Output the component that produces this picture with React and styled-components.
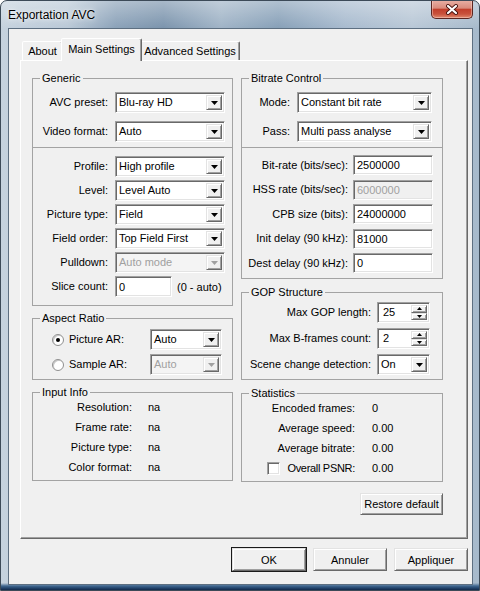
import React from "react";
import styled, { createGlobalStyle } from "styled-components";

const GlobalStyle = createGlobalStyle`
  html, body { margin: 0; padding: 0; background: #fff; }
  body {
    font-family: "Liberation Sans", Arial, sans-serif;
    font-size: 11px;
    color: #000;
  }
  * { box-sizing: border-box; }
`;

const Window = styled.div`
  width: 480px;
  height: 591px;
  display: flex;
  flex-direction: column;
  border: 1px solid #3c4a58;
  border-radius: 7px 7px 0 0;
  overflow: hidden;
  background:
    linear-gradient(to top, #13294a 0, #24466e 2px, #3f668f 4px, rgba(90, 125, 160, 0) 7px),
    linear-gradient(to bottom, rgba(255, 255, 255, 0.35) 0, rgba(255, 255, 255, 0) 28px),
    linear-gradient(90deg, #c5d2de 0%, #b9c8d6 14%, #8aa1b8 24%, #7a93ac 34%, #9fb3c6 46%, #869fb7 58%, #a7bace 72%, #b8c7d6 86%, #a6b9cb 100%);
`;

const TitleBar = styled.div`
  height: 27px;
  flex: none;
  display: flex;
  justify-content: space-between;
  align-items: flex-start;
`;

const Title = styled.div`
  padding: 7px 0 0 7px;
  font-size: 12px;
  line-height: 14px;
  color: #000;
  text-shadow: 0 0 6px rgba(255, 255, 255, 0.95), 0 0 2px rgba(255, 255, 255, 0.9);
`;

const CloseButton = styled.div`
  width: 42px;
  height: 19px;
  margin: -1px 6px 0 0;
  display: flex;
  align-items: center;
  justify-content: center;
  border: 1px solid #5b2621;
  border-top: none;
  border-radius: 0 0 5px 5px;
  background: linear-gradient(to bottom, #e9b1a6 0%, #d98b7c 45%, #c23f2b 52%, #c9523c 78%, #e08a6e 100%);
  box-shadow: inset 0 0 0 1px rgba(255, 220, 210, 0.45);
`;

const Client = styled.div`
  flex: 1;
  margin: 0 6px 5px 7px;
  border: 1px solid #5d6f81;
  background: #f0f0f0;
  padding: 9px 3px 0 11px;
  display: flex;
  flex-direction: column;
`;

const TabStrip = styled.div`
  display: flex;
  align-items: flex-end;
  height: 23px;
  margin: 0 0 -1px 2px;
`;

const Tab = styled.div`
  position: relative;
  z-index: ${(p) => (p.$active ? 2 : 0)};
  width: ${(p) => p.$w}px;
  height: ${(p) => (p.$active ? 23 : 19)}px;
  margin: 0 ${(p) => (p.$active ? -2 : 0)}px ${(p) => (p.$active ? 0 : 1)}px;
  padding-bottom: ${(p) => (p.$active ? 3 : 0)}px;
  display: flex;
  align-items: center;
  justify-content: center;
  background: #f0f0f0;
  border: 1px solid;
  border-bottom: none;
  border-color: #fff #696969 transparent #fff;
  border-radius: 2px 2px 0 0;
  box-shadow: inset -1px 0 #a0a0a0;
  white-space: nowrap;
`;

const Panel = styled.div`
  position: relative;
  z-index: 1;
  width: 448px;
  height: 479px;
  border: 1px solid;
  border-color: #fff #696969 #696969 #fff;
  box-shadow: inset -1px -1px #a0a0a0;
  padding: 11px 0 0 11px;
  display: grid;
  grid-template-columns: 201px 202px;
  column-gap: 8px;
  align-content: start;
  align-items: start;
`;

const Column = styled.div`
  display: flex;
  flex-direction: column;
`;

const Group = styled.fieldset`
  margin: ${(p) => p.$mt || 0}px 0 0;
  padding: 0;
  min-width: 0;
  border: 1px solid #a3a3a3;
`;

const Legend = styled.legend`
  margin-left: 7px;
  padding: 0 2px;
  font-size: 11px;
  line-height: 13px;
`;

const Rows = styled.div`
  display: grid;
  grid-template-columns: ${(p) => p.$cols};
  column-gap: ${(p) => p.$cg}px;
  row-gap: ${(p) => p.$rg}px;
  align-items: center;
  padding: ${(p) => p.$pad};
  border-top: ${(p) => (p.$divided ? "1px solid #a3a3a3" : "none")};
`;

const Label = styled.div`
  text-align: ${(p) => (p.$left ? "left" : "right")};
  white-space: nowrap;
  line-height: 13px;
`;

const CheckLabel = styled.div`
  display: flex;
  justify-content: flex-end;
  align-items: center;
  white-space: nowrap;
  line-height: 13px;
  letter-spacing: -0.3px;
`;

const Value = styled.div`
  line-height: 13px;
`;

const sunken = `
  border: 1px solid;
  border-color: #a0a0a0 #fff #fff #a0a0a0;
  box-shadow: inset 1px 1px #696969, inset -1px -1px #e3e3e3;
`;

const raised = `
  background: #f0f0f0;
  border: 1px solid;
  border-color: #e3e3e3 #696969 #696969 #e3e3e3;
  box-shadow: inset 1px 1px #fff, inset -1px -1px #a0a0a0;
`;

const ComboBox = styled.div`
  ${sunken}
  height: 21px;
  padding: 2px;
  display: flex;
  align-items: stretch;
  background: ${(p) => (p.$disabled ? "#f4f4f4" : "#fff")};
  color: ${(p) => (p.$disabled ? "#a0a0a0" : "#000")};
`;

const ComboText = styled.div`
  flex: 1;
  padding-left: 1px;
  line-height: 15px;
  white-space: nowrap;
  overflow: hidden;
`;

const DropButton = styled.div`
  ${raised}
  width: 16px;
  display: flex;
  align-items: center;
  justify-content: center;
`;

const TextBox = styled.div`
  ${sunken}
  width: ${(p) => (p.$w ? `${p.$w}px` : "auto")};
  height: ${(p) => p.$h || 20}px;
  padding: 0 3px;
  display: flex;
  align-items: center;
  background: ${(p) => (p.$disabled ? "#f0f0f0" : "#fff")};
  color: ${(p) => (p.$disabled ? "#a0a0a0" : "#000")};
  white-space: nowrap;
`;

const SpinBox = styled.div`
  ${sunken}
  height: 21px;
  padding: 2px 2px 2px 5px;
  display: flex;
  align-items: stretch;
  background: #fff;
`;

const SpinText = styled.div`
  flex: 1;
  line-height: 15px;
`;

const SpinButtons = styled.div`
  width: 16px;
  display: flex;
  flex-direction: column;
`;

const SpinButton = styled.div`
  ${raised}
  flex: 1;
  display: flex;
  align-items: center;
  justify-content: center;
`;

const Inline = styled.div`
  display: flex;
  align-items: center;
  gap: 5px;
  white-space: nowrap;
`;

const Radio = styled.div`
  width: 12px;
  height: 12px;
  border-radius: 50%;
  border: 1px solid #8f8f8f;
  background: #fff;
  box-shadow: inset 1px 1px #c8c8c8;
  display: flex;
  align-items: center;
  justify-content: center;
  &::after {
    content: "";
    width: 4px;
    height: 4px;
    border-radius: 50%;
    background: ${(p) => (p.$checked ? "#000" : "transparent")};
  }
`;

const CheckBox = styled.div`
  ${sunken}
  width: 13px;
  height: 13px;
  margin-right: 7px;
  background: #fff;
`;

const ButtonBar = styled.div`
  display: flex;
  justify-content: flex-end;
  gap: 7px;
  margin: 9px 1px 0 0;
`;

const PushButton = styled.div`
  ${raised}
  width: ${(p) => p.$w || 74}px;
  height: ${(p) => p.$h || 23}px;
  display: flex;
  align-items: center;
  justify-content: center;
  white-space: nowrap;
  ${(p) => (p.$default ? "outline: 1px solid #1a1a1a;" : "")}
`;

const RestoreCell = styled.div`
  grid-column: 2;
  justify-self: end;
  margin-top: 11px;
`;

const Arrow = ({ disabled }) => (
  <svg width="7" height="4" viewBox="0 0 7 4">
    <path d="M0 0h7L3.5 4z" fill={disabled ? "#a0a0a0" : "#000"} />
  </svg>
);

const SmallArrow = ({ up }) => (
  <svg width="5" height="3" viewBox="0 0 5 3">
    <path d={up ? "M0 3h5L2.5 0z" : "M0 0h5L2.5 3z"} fill="#000" />
  </svg>
);

const Combo = ({ value, disabled }) => (
  <ComboBox $disabled={disabled}>
    <ComboText>{value}</ComboText>
    <DropButton>
      <Arrow disabled={disabled} />
    </DropButton>
  </ComboBox>
);

const Spin = ({ value }) => (
  <SpinBox>
    <SpinText>{value}</SpinText>
    <SpinButtons>
      <SpinButton>
        <SmallArrow up />
      </SpinButton>
      <SpinButton>
        <SmallArrow />
      </SpinButton>
    </SpinButtons>
  </SpinBox>
);

const CloseGlyph = () => (
  <svg width="14" height="11" viewBox="0 0 14 11">
    <path d="M3 2L11 9M11 2L3 9" stroke="#4a1510" strokeWidth="4" strokeLinecap="round" />
    <path d="M3 2L11 9M11 2L3 9" stroke="#fff" strokeWidth="2.2" strokeLinecap="round" />
  </svg>
);

const inputInfo = [
  ["Resolution:", "na"],
  ["Frame rate:", "na"],
  ["Picture type:", "na"],
  ["Color format:", "na"],
];

const statistics = [
  ["Encoded frames:", "0"],
  ["Average speed:", "0.00"],
  ["Average bitrate:", "0.00"],
];

const App = () => (
  <>
    <GlobalStyle />
    <Window>
      <TitleBar>
        <Title>Exportation AVC</Title>
        <CloseButton>
          <CloseGlyph />
        </CloseButton>
      </TitleBar>
      <Client>
        <TabStrip>
          <Tab $w={41}>About</Tab>
          <Tab $w={81} $active>
            Main Settings
          </Tab>
          <Tab $w={100}>Advanced Settings</Tab>
        </TabStrip>
        <Panel>
          <Column>
            <Group>
              <Legend>Generic</Legend>
              <Rows $cols="75px 110px" $cg={7} $rg={8} $pad="7px 0 5px">
                <Label>AVC preset:</Label>
                <Combo value="Blu-ray HD" />
                <Label>Video format:</Label>
                <Combo value="Auto" />
              </Rows>
              <Rows $divided $cols="75px 110px" $cg={7} $rg={3} $pad="8px 0 8px">
                <Label>Profile:</Label>
                <Combo value="High profile" />
                <Label>Level:</Label>
                <Combo value="Level Auto" />
                <Label>Picture type:</Label>
                <Combo value="Field" />
                <Label>Field order:</Label>
                <Combo value="Top Field First" />
                <Label>Pulldown:</Label>
                <Combo value="Auto mode" disabled />
                <Label>Slice count:</Label>
                <Inline>
                  <TextBox $w={57} $h={21}>0</TextBox>
                  (0 - auto)
                </Inline>
              </Rows>
            </Group>

            <Group $mt={6}>
              <Legend>Aspect Ratio</Legend>
              <Rows $cols="13px 77px 72px" $cg={4} $rg={4} $pad="4px 0 4px 19px">
                <Radio $checked />
                <Label $left>Picture AR:</Label>
                <Combo value="Auto" />
                <Radio />
                <Label $left>Sample AR:</Label>
                <Combo value="Auto" disabled />
              </Rows>
            </Group>

            <Group $mt={6}>
              <Legend>Input Info</Legend>
              <Rows $cols="99px auto" $cg={16} $rg={7} $pad="2px 0 6px">
                {inputInfo.map(([k, v]) => (
                  <React.Fragment key={k}>
                    <Label>{k}</Label>
                    <Value>{v}</Value>
                  </React.Fragment>
                ))}
              </Rows>
            </Group>
          </Column>

          <Column>
            <Group>
              <Legend>Bitrate Control</Legend>
              <Rows $cols="48px 135px" $cg={7} $rg={8} $pad="7px 0 5px">
                <Label>Mode:</Label>
                <Combo value="Constant bit rate" />
                <Label>Pass:</Label>
                <Combo value="Multi pass analyse" />
              </Rows>
              <Rows $divided $cols="106px 80px" $cg={5} $rg={4.5} $pad="7px 0 5px">
                <Label>Bit-rate (bits/sec):</Label>
                <TextBox>2500000</TextBox>
                <Label>HSS rate (bits/sec):</Label>
                <TextBox $disabled>6000000</TextBox>
                <Label>CPB size (bits):</Label>
                <TextBox>24000000</TextBox>
                <Label>Init delay (90 kHz):</Label>
                <TextBox>81000</TextBox>
                <Label>Dest delay (90 kHz):</Label>
                <TextBox>0</TextBox>
              </Rows>
            </Group>

            <Group $mt={7}>
              <Legend>GOP Structure</Legend>
              <Rows $cols="129px 53px" $cg={6} $rg={5} $pad="3px 0 4px">
                <Label>Max GOP length:</Label>
                <Spin value="25" />
                <Label>Max B-frames count:</Label>
                <Spin value="2" />
                <Label>Scene change detection:</Label>
                <Combo value="On" />
              </Rows>
            </Group>

            <Group $mt={7}>
              <Legend>Statistics</Legend>
              <Rows $cols="113px auto" $cg={17} $rg={7} $pad="2px 0 6px">
                {statistics.map(([k, v]) => (
                  <React.Fragment key={k}>
                    <Label>{k}</Label>
                    <Value>{v}</Value>
                  </React.Fragment>
                ))}
                <CheckLabel>
                  <CheckBox />
                  Overall PSNR:
                </CheckLabel>
                <Value>0.00</Value>
              </Rows>
            </Group>
          </Column>

          <RestoreCell>
            <PushButton $w={83} $h={22}>
              Restore default
            </PushButton>
          </RestoreCell>
        </Panel>
        <ButtonBar>
          <PushButton $default>OK</PushButton>
          <PushButton>Annuler</PushButton>
          <PushButton>Appliquer</PushButton>
        </ButtonBar>
      </Client>
    </Window>
  </>
);

export default App;
